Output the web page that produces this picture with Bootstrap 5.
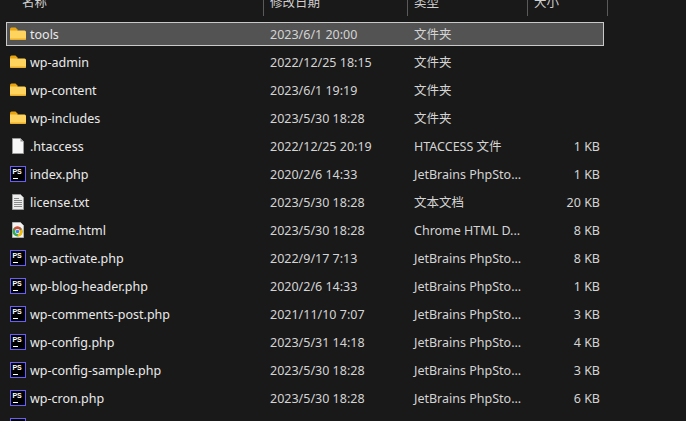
<!DOCTYPE html>
<html lang="zh-CN"><head><meta charset="utf-8">
<link rel="stylesheet" href="https://cdn.jsdelivr.net/npm/bootstrap@5.3.0/dist/css/bootstrap.min.css">
<style>
html,body{height:421px;overflow:hidden;background:#191919}
body{font-family:"Noto Sans","Noto Sans CJK SC",sans-serif;font-size:12.5px;color:#d4d4d4}
.fm-head{height:16px;overflow:hidden;align-items:flex-end;width:608px}
.fm-hc{line-height:12px;margin-top:-3px;padding-left:6px;flex:none;border-right:1px solid #5a5a5a;color:#cfcfcf;height:19px;overflow:hidden}
.fm-hc span{display:block}
.w-name{width:264px}.w-date{width:144px}.w-type{width:120px}.w-size{width:80px}
.fm-head .w-name{padding-left:22px}
.fm-list{padding:6px 0 0 6px;width:604px;gap:4px}
.fm-row{height:24px;line-height:26px;flex:none;white-space:nowrap}
.fm-row.fm-sel{background:#535353;box-shadow:inset 0 0 0 1px #c9c9c9}
.fm-row>div{flex:none;overflow:hidden}
.c-name{width:258px;padding-left:4px;color:#eaeaea;gap:4px}
.c-date{width:144px;padding-left:6px}
.c-type{width:120px;padding-left:6px}
.c-size{width:72px;text-align:right}
.fm-ico{width:16px;height:16px;flex:none;display:block;margin-top:4px}
</style></head><body>
<svg width="0" height="0" class="position-absolute">
<defs>
<symbol id="folder" viewBox="0 0 16 16"><path d="M0 3.200Q0 1.500 1.500 1.500H5.500L7.500 3.500V5H0Z" fill="#e8a30e"/><path d="M0 4.500H14.500Q16 4.500 16 6V12.500Q16 14 14.500 14H1.500Q0 14 0 12.500Z" fill="#ffd45e"/><path d="M0 12.600H16V12.800Q16 14 14.500 14H1.500Q0 14 0 12.800Z" fill="#e9ac2b"/></symbol>
<symbol id="blank" viewBox="0 0 16 16"><path d="M2.500.500H10.500L13.500 3.500V15.500H2.500Z" fill="#f7f7f7" stroke="#9a9a9a"/><path d="M10.500.500V3.500H13.500Z" fill="#8f8f8f"/></symbol>
<symbol id="txt" viewBox="0 0 16 16"><path d="M2.500.500H10.500L13.500 3.500V15.500H2.500Z" fill="#ededed" stroke="#9a9a9a"/><path d="M4 4.500H9M4 6.500H12M4 8.500H12M4 10.500H12M4 12.500H12" stroke="#8a8a8a"/></symbol>
<symbol id="ps" viewBox="0 0 16 16"><rect x=".5" y=".5" width="15" height="15" fill="#000" stroke="#6a5cff"/><text x="2.400" y="8.200" font-family="Liberation Sans" font-size="7" font-weight="700" fill="#fff">PS</text><path d="M3 12.500H8" stroke="#fff"/></symbol>
<symbol id="chrome" viewBox="0 0 16 16"><path d="M2.500.500H10.500L13.500 3.500V15.500H2.500Z" fill="#f2f2f2" stroke="#b0b0b0"/><circle cx="7.500" cy="9.500" r="5" fill="#34a853"/><path d="M3.200 7A5 5 0 0 1 12 7.300L7.500 7.500Z" fill="#ea4335"/><path d="M12 7.300A5 5 0 0 1 7.500 14.500L8.500 9.500Z" fill="#fbbc05"/><circle cx="7.500" cy="9.500" r="2.400" fill="#fff"/><circle cx="7.500" cy="9.500" r="1.800" fill="#4285f4"/></symbol>
</defs></svg>
<div class="d-flex fm-head">
<div class="fm-hc w-name"><span>名称</span></div><div class="fm-hc w-date"><span>修改日期</span></div><div class="fm-hc w-type"><span>类型</span></div><div class="fm-hc w-size"><span>大小</span></div>
</div>
<div class="d-flex flex-column fm-list">
<div class="d-flex fm-row fm-sel"><div class="c-name d-flex"><svg class="fm-ico"><use href="#folder"/></svg>tools</div><div class="c-date">2023/6/1 20:00</div><div class="c-type">文件夹</div><div class="c-size"></div></div>
<div class="d-flex fm-row"><div class="c-name d-flex"><svg class="fm-ico"><use href="#folder"/></svg>wp-admin</div><div class="c-date">2022/12/25 18:15</div><div class="c-type">文件夹</div><div class="c-size"></div></div>
<div class="d-flex fm-row"><div class="c-name d-flex"><svg class="fm-ico"><use href="#folder"/></svg>wp-content</div><div class="c-date">2023/6/1 19:19</div><div class="c-type">文件夹</div><div class="c-size"></div></div>
<div class="d-flex fm-row"><div class="c-name d-flex"><svg class="fm-ico"><use href="#folder"/></svg>wp-includes</div><div class="c-date">2023/5/30 18:28</div><div class="c-type">文件夹</div><div class="c-size"></div></div>
<div class="d-flex fm-row"><div class="c-name d-flex"><svg class="fm-ico"><use href="#blank"/></svg>.htaccess</div><div class="c-date">2022/12/25 20:19</div><div class="c-type">HTACCESS 文件</div><div class="c-size">1 KB</div></div>
<div class="d-flex fm-row"><div class="c-name d-flex"><svg class="fm-ico"><use href="#ps"/></svg>index.php</div><div class="c-date">2020/2/6 14:33</div><div class="c-type">JetBrains PhpSto...</div><div class="c-size">1 KB</div></div>
<div class="d-flex fm-row"><div class="c-name d-flex"><svg class="fm-ico"><use href="#txt"/></svg>license.txt</div><div class="c-date">2023/5/30 18:28</div><div class="c-type">文本文档</div><div class="c-size">20 KB</div></div>
<div class="d-flex fm-row"><div class="c-name d-flex"><svg class="fm-ico"><use href="#chrome"/></svg>readme.html</div><div class="c-date">2023/5/30 18:28</div><div class="c-type">Chrome HTML D...</div><div class="c-size">8 KB</div></div>
<div class="d-flex fm-row"><div class="c-name d-flex"><svg class="fm-ico"><use href="#ps"/></svg>wp-activate.php</div><div class="c-date">2022/9/17 7:13</div><div class="c-type">JetBrains PhpSto...</div><div class="c-size">8 KB</div></div>
<div class="d-flex fm-row"><div class="c-name d-flex"><svg class="fm-ico"><use href="#ps"/></svg>wp-blog-header.php</div><div class="c-date">2020/2/6 14:33</div><div class="c-type">JetBrains PhpSto...</div><div class="c-size">1 KB</div></div>
<div class="d-flex fm-row"><div class="c-name d-flex"><svg class="fm-ico"><use href="#ps"/></svg>wp-comments-post.php</div><div class="c-date">2021/11/10 7:07</div><div class="c-type">JetBrains PhpSto...</div><div class="c-size">3 KB</div></div>
<div class="d-flex fm-row"><div class="c-name d-flex"><svg class="fm-ico"><use href="#ps"/></svg>wp-config.php</div><div class="c-date">2023/5/31 14:18</div><div class="c-type">JetBrains PhpSto...</div><div class="c-size">4 KB</div></div>
<div class="d-flex fm-row"><div class="c-name d-flex"><svg class="fm-ico"><use href="#ps"/></svg>wp-config-sample.php</div><div class="c-date">2023/5/30 18:28</div><div class="c-type">JetBrains PhpSto...</div><div class="c-size">3 KB</div></div>
<div class="d-flex fm-row"><div class="c-name d-flex"><svg class="fm-ico"><use href="#ps"/></svg>wp-cron.php</div><div class="c-date">2023/5/30 18:28</div><div class="c-type">JetBrains PhpSto...</div><div class="c-size">6 KB</div></div>
<div class="d-flex fm-row"><div class="c-name d-flex"><svg class="fm-ico"><use href="#ps"/></svg></div></div>
</div>
<script src="https://cdn.jsdelivr.net/npm/bootstrap@5.3.0/dist/js/bootstrap.bundle.min.js"></script>
</body></html>
